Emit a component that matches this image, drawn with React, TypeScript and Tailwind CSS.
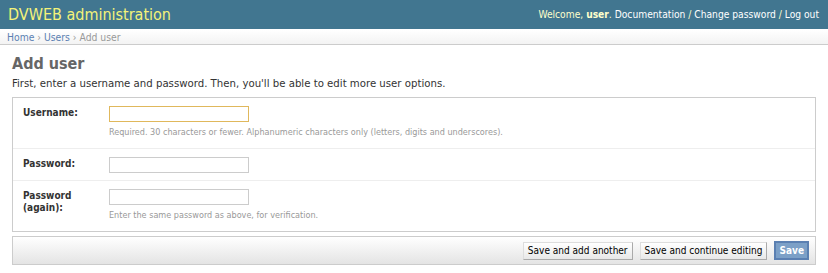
import React from 'react';

const rows = [
  { label: 'Username:', help: 'Required. 30 characters or fewer. Alphanumeric characters only (letters, digits and underscores).', focus: true },
  { label: 'Password:', help: '', focus: false },
  { label: 'Password (again):', help: 'Enter the same password as above, for verification.', focus: false },
];

export default function App() {
  return (
    <div className="min-h-[273px] bg-white font-['DejaVu_Sans_Condensed','Liberation_Sans',sans-serif] text-[12px] text-[#333]">
      <div className="flex h-[29px] items-center justify-between bg-[#417690] pl-[8px] pr-[9px]">
        <h1 className="text-[16px] leading-none text-[#f4f379]">DVWEB administration</h1>
        <div className="text-[10.2px] text-[#ffc]">
          Welcome, <strong>user</strong>.{' '}
          <span className="text-white">Documentation</span> /{' '}
          <span className="text-white">Change password</span> /{' '}
          <span className="text-white">Log out</span>
        </div>
      </div>
      <div className="h-[16px] border-t border-t-white border-b border-b-[#ccc] bg-gradient-to-b from-white to-[#f3f3f3] px-[7px] text-[10.3px] leading-[14px] text-[#999]">
        <span className="text-[#5b80b2]">Home</span> › <span className="text-[#5b80b2]">Users</span> › Add user
      </div>
      <div className="px-[12px]">
        <h2 className="mt-[8px] text-[16px] font-bold leading-[22px] text-[#666]">Add user</h2>
        <p className="mt-[2px] text-[11.3px] leading-[14px] text-[#333]">
          First, enter a username and password. Then, you'll be able to edit more user options.
        </p>
        <div className="mt-[6px] border border-[#ccc]">
          {rows.map((r, i) => (
            <div key={r.label} className={`flex px-[10px] pt-[8px] ${r.help ? 'pb-[10px]' : 'pb-[7px]'} ${i < rows.length - 1 ? 'border-b border-[#eee]' : ''}`}>
              <div className="w-[86px] pt-[1px] text-[10px] font-bold leading-[12px] text-[#333]">{r.label}</div>
              <div>
                <div className={`h-[16px] w-[140px] border ${r.focus ? 'border-[#e0b85c]' : 'border-[#ccc]'}`} />
                {r.help && <div className="mt-[4px] text-[9px] leading-[12px] text-[#999]">{r.help}</div>}
              </div>
            </div>
          ))}
        </div>
        <div className="mt-[4px] flex items-center justify-end gap-[7px] border border-[#ccc] bg-gradient-to-b from-white to-[#e4e4e4] px-[6px] py-[4px] text-[10px]">
          <button className="h-[18px] border border-[#ddd] border-r-[#aaa] border-b-[#aaa] bg-gradient-to-b from-white to-[#e8e8e8] px-[4px] leading-none text-black">Save and add another</button>
          <button className="h-[18px] border border-[#ddd] border-r-[#aaa] border-b-[#aaa] bg-gradient-to-b from-white to-[#e8e8e8] px-[4px] leading-none text-black">Save and continue editing</button>
          <button className="h-[19px] border-2 border-[#5b80b2] bg-[#7ca0c7] px-[3px] leading-none font-bold text-white">Save</button>
        </div>
      </div>
    </div>
  );
}
